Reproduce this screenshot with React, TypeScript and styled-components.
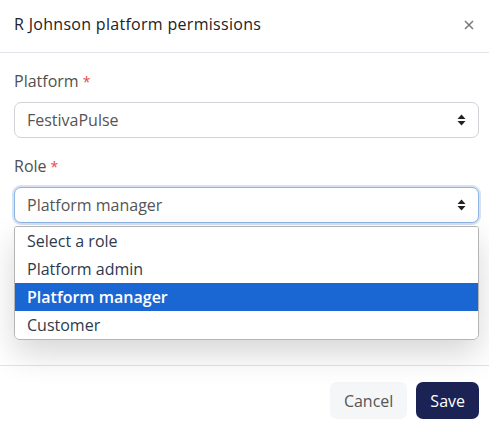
import styled, { createGlobalStyle } from "styled-components";

const GlobalStyle = createGlobalStyle`
  html, body {
    margin: 0;
    background: #fff;
  }
  body {
    font-family: "Open Sans", "Noto Sans", sans-serif;
  }
`;

const Modal = styled.div`
  width: 489px;
  height: 435px;
  background: #fff;
  display: flex;
  flex-direction: column;
`;

const Header = styled.div`
  height: 53px;
  box-sizing: border-box;
  border-bottom: 1px solid #e1e4e8;
  padding: 13px 14px 0 14px;
  display: flex;
  justify-content: space-between;
  align-items: flex-start;
`;

const Title = styled.h1`
  margin: 0;
  font-size: 16px;
  font-weight: 400;
  letter-spacing: 0.3px;
  line-height: 22px;
  color: #222;
`;

const Close = styled.button`
  border: 0;
  background: none;
  padding: 0;
  margin-top: 6px;
  width: 12px;
  height: 12px;
  display: flex;
  cursor: pointer;
`;

const Body = styled.div`
  padding: 18px 10px 0 14px;
  height: 313px;
  box-sizing: border-box;
  border-bottom: 1px solid #e1e4e8;
`;

const Field = styled.div<{ $last?: boolean }>`
  margin-bottom: ${({ $last }) => ($last ? "0" : "18px")};
`;

const Label = styled.label`
  display: block;
  font-size: 16px;
  line-height: 20px;
  color: #505050;
  margin-bottom: 10px;
`;

const Required = styled.span`
  color: #e5484d;
  margin-left: 4px;
  font-size: 14px;
`;

const SelectWrap = styled.div`
  position: relative;
`;

const SelectBox = styled.div<{ $focused?: boolean }>`
  height: 36px;
  box-sizing: border-box;
  border-radius: 7px;
  border: 1px solid ${({ $focused }) => ($focused ? "#8cb4e4" : "#cfd3d8")};
  box-shadow: ${({ $focused }) =>
    $focused ? "0 0 0 2px rgba(140, 170, 210, 0.35)" : "none"};
  padding: 0 12px 0 12px;
  display: flex;
  align-items: center;
  justify-content: space-between;
  font-size: 16px;
  color: #555;
  background: #fff;
`;

const Options = styled.ul`
  position: absolute;
  top: calc(100% + 3px);
  left: 0;
  right: 0;
  margin: 0;
  padding: 0;
  list-style: none;
  background: #fff;
  border: 1px solid #b4b4b4;
  border-radius: 3px 3px 6px 6px;
  overflow: hidden;
  box-shadow: 0 14px 32px rgba(0, 0, 0, 0.16);
  z-index: 2;
`;

const Option = styled.li<{ $active?: boolean }>`
  height: 28px;
  line-height: 28px;
  padding-left: 12px;
  font-size: 16px;
  font-weight: ${({ $active }) => ($active ? 600 : 500)};
  color: ${({ $active }) => ($active ? "#fff" : "#2e3a4c")};
  background: ${({ $active }) => ($active ? "#1a66d2" : "#fff")};
`;

const Footer = styled.div`
  display: flex;
  justify-content: flex-end;
  gap: 9px;
  padding: 16px 10px 0 0;
`;

const Button = styled.button<{ $primary?: boolean }>`
  height: 37px;
  border: 0;
  border-radius: 7px;
  padding: 0 ${({ $primary }) => ($primary ? "14px" : "14px")};
  font-family: inherit;
  font-size: 16px;
  background: ${({ $primary }) => ($primary ? "#1a2354" : "#f5f6f8")};
  color: ${({ $primary }) => ($primary ? "#fff" : "#555")};
  cursor: pointer;
`;

const Arrows = () => (
  <svg width="9" height="12" viewBox="0 0 9 12">
    <path d="M4.5 0.5 L8.5 5 H0.5 Z M4.5 11.5 L0.5 7 H8.5 Z" fill="#222" />
  </svg>
);

const roles = ["Select a role", "Platform admin", "Platform manager", "Customer"];

export default function App() {
  return (
    <>
      <GlobalStyle />
      <Modal>
        <Header>
          <Title>R Johnson platform permissions</Title>
          <Close aria-label="Close">
            <svg width="12" height="12" viewBox="0 0 12 12">
              <path d="M2 2 L10 10 M10 2 L2 10" stroke="#777" strokeWidth="1.5" />
            </svg>
          </Close>
        </Header>
        <Body>
          <Field>
            <Label>
              Platform<Required>*</Required>
            </Label>
            <SelectBox>
              FestivaPulse
              <Arrows />
            </SelectBox>
          </Field>
          <Field $last>
            <Label>
              Role<Required>*</Required>
            </Label>
            <SelectWrap>
              <SelectBox $focused>
                Platform manager
                <Arrows />
              </SelectBox>
              <Options>
                {roles.map((r) => (
                  <Option key={r} $active={r === "Platform manager"}>
                    {r}
                  </Option>
                ))}
              </Options>
            </SelectWrap>
          </Field>
        </Body>
        <Footer>
          <Button>Cancel</Button>
          <Button $primary>Save</Button>
        </Footer>
      </Modal>
    </>
  );
}
